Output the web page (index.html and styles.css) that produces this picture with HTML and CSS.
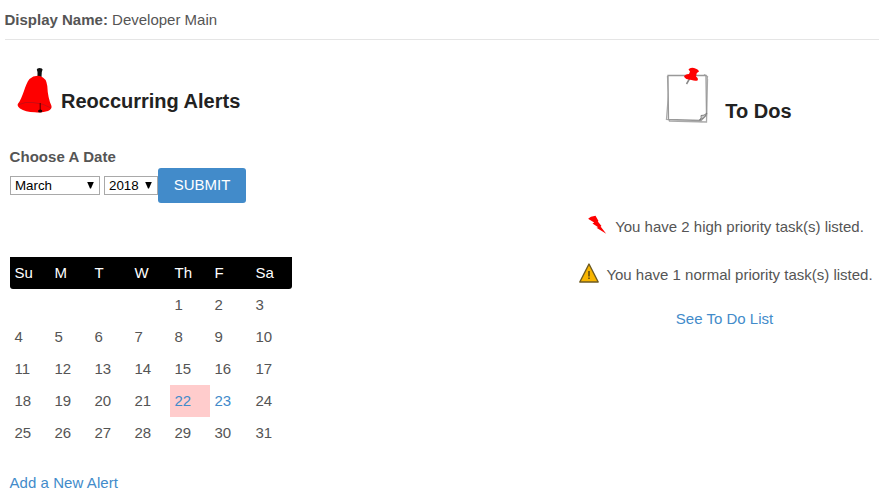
FILE: index.html
```html
<!DOCTYPE html>
<html lang="en">
<head>
<meta charset="utf-8">
<title>Developer Main</title>
<link rel="stylesheet" href="styles.css">
</head>
<body>
<header class="user-bar"><strong>Display Name:</strong> Developer Main</header>
<main class="dashboard">
  <section class="alerts">
    <div class="alerts-title">
      <svg class="bell" viewBox="0 0 36 48" width="36" height="48">
        <path d="M20.500 11V6L19.800 3.500Q20 2 22.500 2Q25.500 2 25.600 3.500L24.800 6L24.500 11Z" fill="#111"/>
        <path d="M.8 38C6 32 8 18 12.500 13Q17 9 23 10Q29.500 12 30.300 20Q30.800 32 34.500 40Q35.200 43 31 45Q25 47 18 46.200Q8 46 3 42.500Q0 40 .8 38Z" fill="#fe0000"/>
        <path d="M2 38.500Q8 35.500 16 36.500Q27 37.500 34 42" fill="none" stroke="#b51018" stroke-width=".7"/>
        <path d="M23.200 37V44" stroke="#500" stroke-width="1"/>
        <ellipse cx="23.200" cy="45" rx="2.200" ry="1.600" fill="#200"/>
      </svg>
      <h2>Reoccurring Alerts</h2>
    </div>
    <form class="date-form">
      <strong class="form-title">Choose A Date</strong>
      <div class="controls">
        <div class="picker month"><span>March</span><svg width="7" height="7" viewBox="0 0 7 7"><path d="M.2 0h6.600L4 6.500H3z"/></svg></div>
        <div class="picker year"><span>2018</span><svg width="7" height="7" viewBox="0 0 7 7"><path d="M.2 0h6.600L4 6.500H3z"/></svg></div>
        <button class="submit" type="button">SUBMIT</button>
      </div>
    </form>
    <div class="calendar">
      <div class="week days"><span>Su</span><span>M</span><span>T</span><span>W</span><span>Th</span><span>F</span><span>Sa</span></div>
      <div class="week"><span></span><span></span><span></span><span></span><span>1</span><span>2</span><span>3</span></div>
      <div class="week"><span>4</span><span>5</span><span>6</span><span>7</span><span>8</span><span>9</span><span>10</span></div>
      <div class="week"><span>11</span><span>12</span><span>13</span><span>14</span><span>15</span><span>16</span><span>17</span></div>
      <div class="week"><span>18</span><span>19</span><span>20</span><span>21</span><span class="today"><a>22</a></span><span><a>23</a></span><span>24</span></div>
      <div class="week"><span>25</span><span>26</span><span>27</span><span>28</span><span>29</span><span>30</span><span>31</span></div>
    </div>
    <a class="add">Add a New Alert</a>
  </section>
  <section class="todos">
    <div class="todos-title">
      <svg class="note" viewBox="0 0 44 58" width="44" height="58">
        <path d="M5 9L1.500 53.500L37 55.500L42.500 10.500L39 8.500" fill="#fff" stroke="#aaa" stroke-width="1.300"/>
        <path d="M2.500 10L4.500 55L41.500 56L42.500 13" fill="#fff" stroke="#aaa" stroke-width="1.300"/>
        <path d="M3 9.500L41 9.500L41.500 49L36 54.500L3.500 53.500Z" fill="#fff" stroke="#999" stroke-width="1.300"/>
        <path d="M34.500 54Q37 52 36 49.500Q39 50 42 47Q40 52.500 34.500 54Z" fill="#ccc" stroke="#777" stroke-width=".9"/>
        <path d="M25 12L21.500 18" stroke="#888" stroke-width="1.500"/>
        <path d="M23.500 3.500Q25 1.200 29 2Q33.500 3.200 34 5.500L31.800 7L31 10.500Q33.800 12.500 32.500 14.500Q30 15.300 26.500 14Q20 13.500 19 10.500Q20 8 24 8L25 5.500Z" fill="#fe0000"/>
      </svg>
      <h2>To Dos</h2>
    </div>
    <div class="task high">
      <svg width="19" height="20" viewBox="0 0 19 20"><path d="M.3 3.500L3 1.700L7.500 .8L10.500 6L9.800 6.500L13.500 11L12.600 11.500L18.200 18.800L8.500 12.800L10.200 12.200L4.500 8.500L6.200 7.500L.8 4.200Z" fill="#fe0000"/></svg>
      <span>You have 2 high priority task(s) listed.</span>
    </div>
    <div class="task normal">
      <svg width="20" height="20" viewBox="0 0 20 20"><path d="M10 1L19.200 19H.8Z" fill="#f8b500" stroke="#6e5a20" stroke-width="1.400" stroke-linejoin="round"/><path d="M9 8h2v5.500H9zM9 14.500h2v1.500H9z" fill="#80600c"/></svg>
      <span>You have 1 normal priority task(s) listed.</span>
    </div>
    <a class="see">See To Do List</a>
  </section>
</main>
</body>
</html>
```
FILE: styles.css
```css
* { box-sizing: border-box; }
body { margin: 0; height: 495px; overflow: hidden; background: #fff; color: #555; font: 15px/20px "Liberation Sans", Arial, sans-serif; }
h2 { margin: 0; color: #222; font-size: 20px; line-height: 24px; }
a { color: #428bca; }
svg { display: block; flex: none; }
.user-bar { height: 40px; margin-left: 5px; padding-top: 10px; border-bottom: 1px solid #e5e5e5; text-indent: -0.5px; }
.dashboard { display: flex; justify-content: space-between; }
.alerts { width: 292px; padding: 26px 0 0 10px; }
.alerts-title { display: flex; padding-left: 7px; height: 81px; }
.alerts-title h2 { margin: 23px 0 0 8px; white-space: nowrap; }
.form-title { display: block; height: 21px; text-indent: -0.5px; letter-spacing: 0.07px; }
.controls { display: flex; height: 35px; align-items: center; }
.picker { display: flex; align-items: center; justify-content: space-between; height: 19px; border: 1px solid #a9a9a9; padding: 0 5.5px 0 4px; color: #000; font-size: 13.333px; line-height: 17px; }
.month { width: 90px; margin-right: 4px; }
.year { width: 54px; }
.submit { width: 88px; height: 35px; padding: 0 0 2px; border: 0; border-radius: 3px; background: #428bca; color: #fff; font: 15px/20px "Liberation Sans", Arial, sans-serif; }
.calendar { margin-top: 54px; }
.week { display: grid; grid-template-columns: repeat(5, 40px) 41px 41px; height: 32px; line-height: 32px; }
.week span { padding-left: 4.5px; }
.days { background: #000; color: #fff; border-radius: 0 0 3px 3px; }
.week .today { background: #fcc; }
.add { display: block; margin-top: 24px; text-indent: -0.5px; letter-spacing: 0.06px; }
.todos { width: 309px; padding-top: 26px; display: flex; flex-direction: column; align-items: center; }
.todos-title { display: flex; height: 149px; margin-left: 8px; }
.todos-title h2 { margin: 33px 0 0 16px; }
.task { display: flex; white-space: nowrap; }
.task span { padding-top: 2px; }
.high { height: 48px; gap: 8px; margin-left: 3px; }
.normal { height: 46px; gap: 7px; margin-left: 3px; }
```
